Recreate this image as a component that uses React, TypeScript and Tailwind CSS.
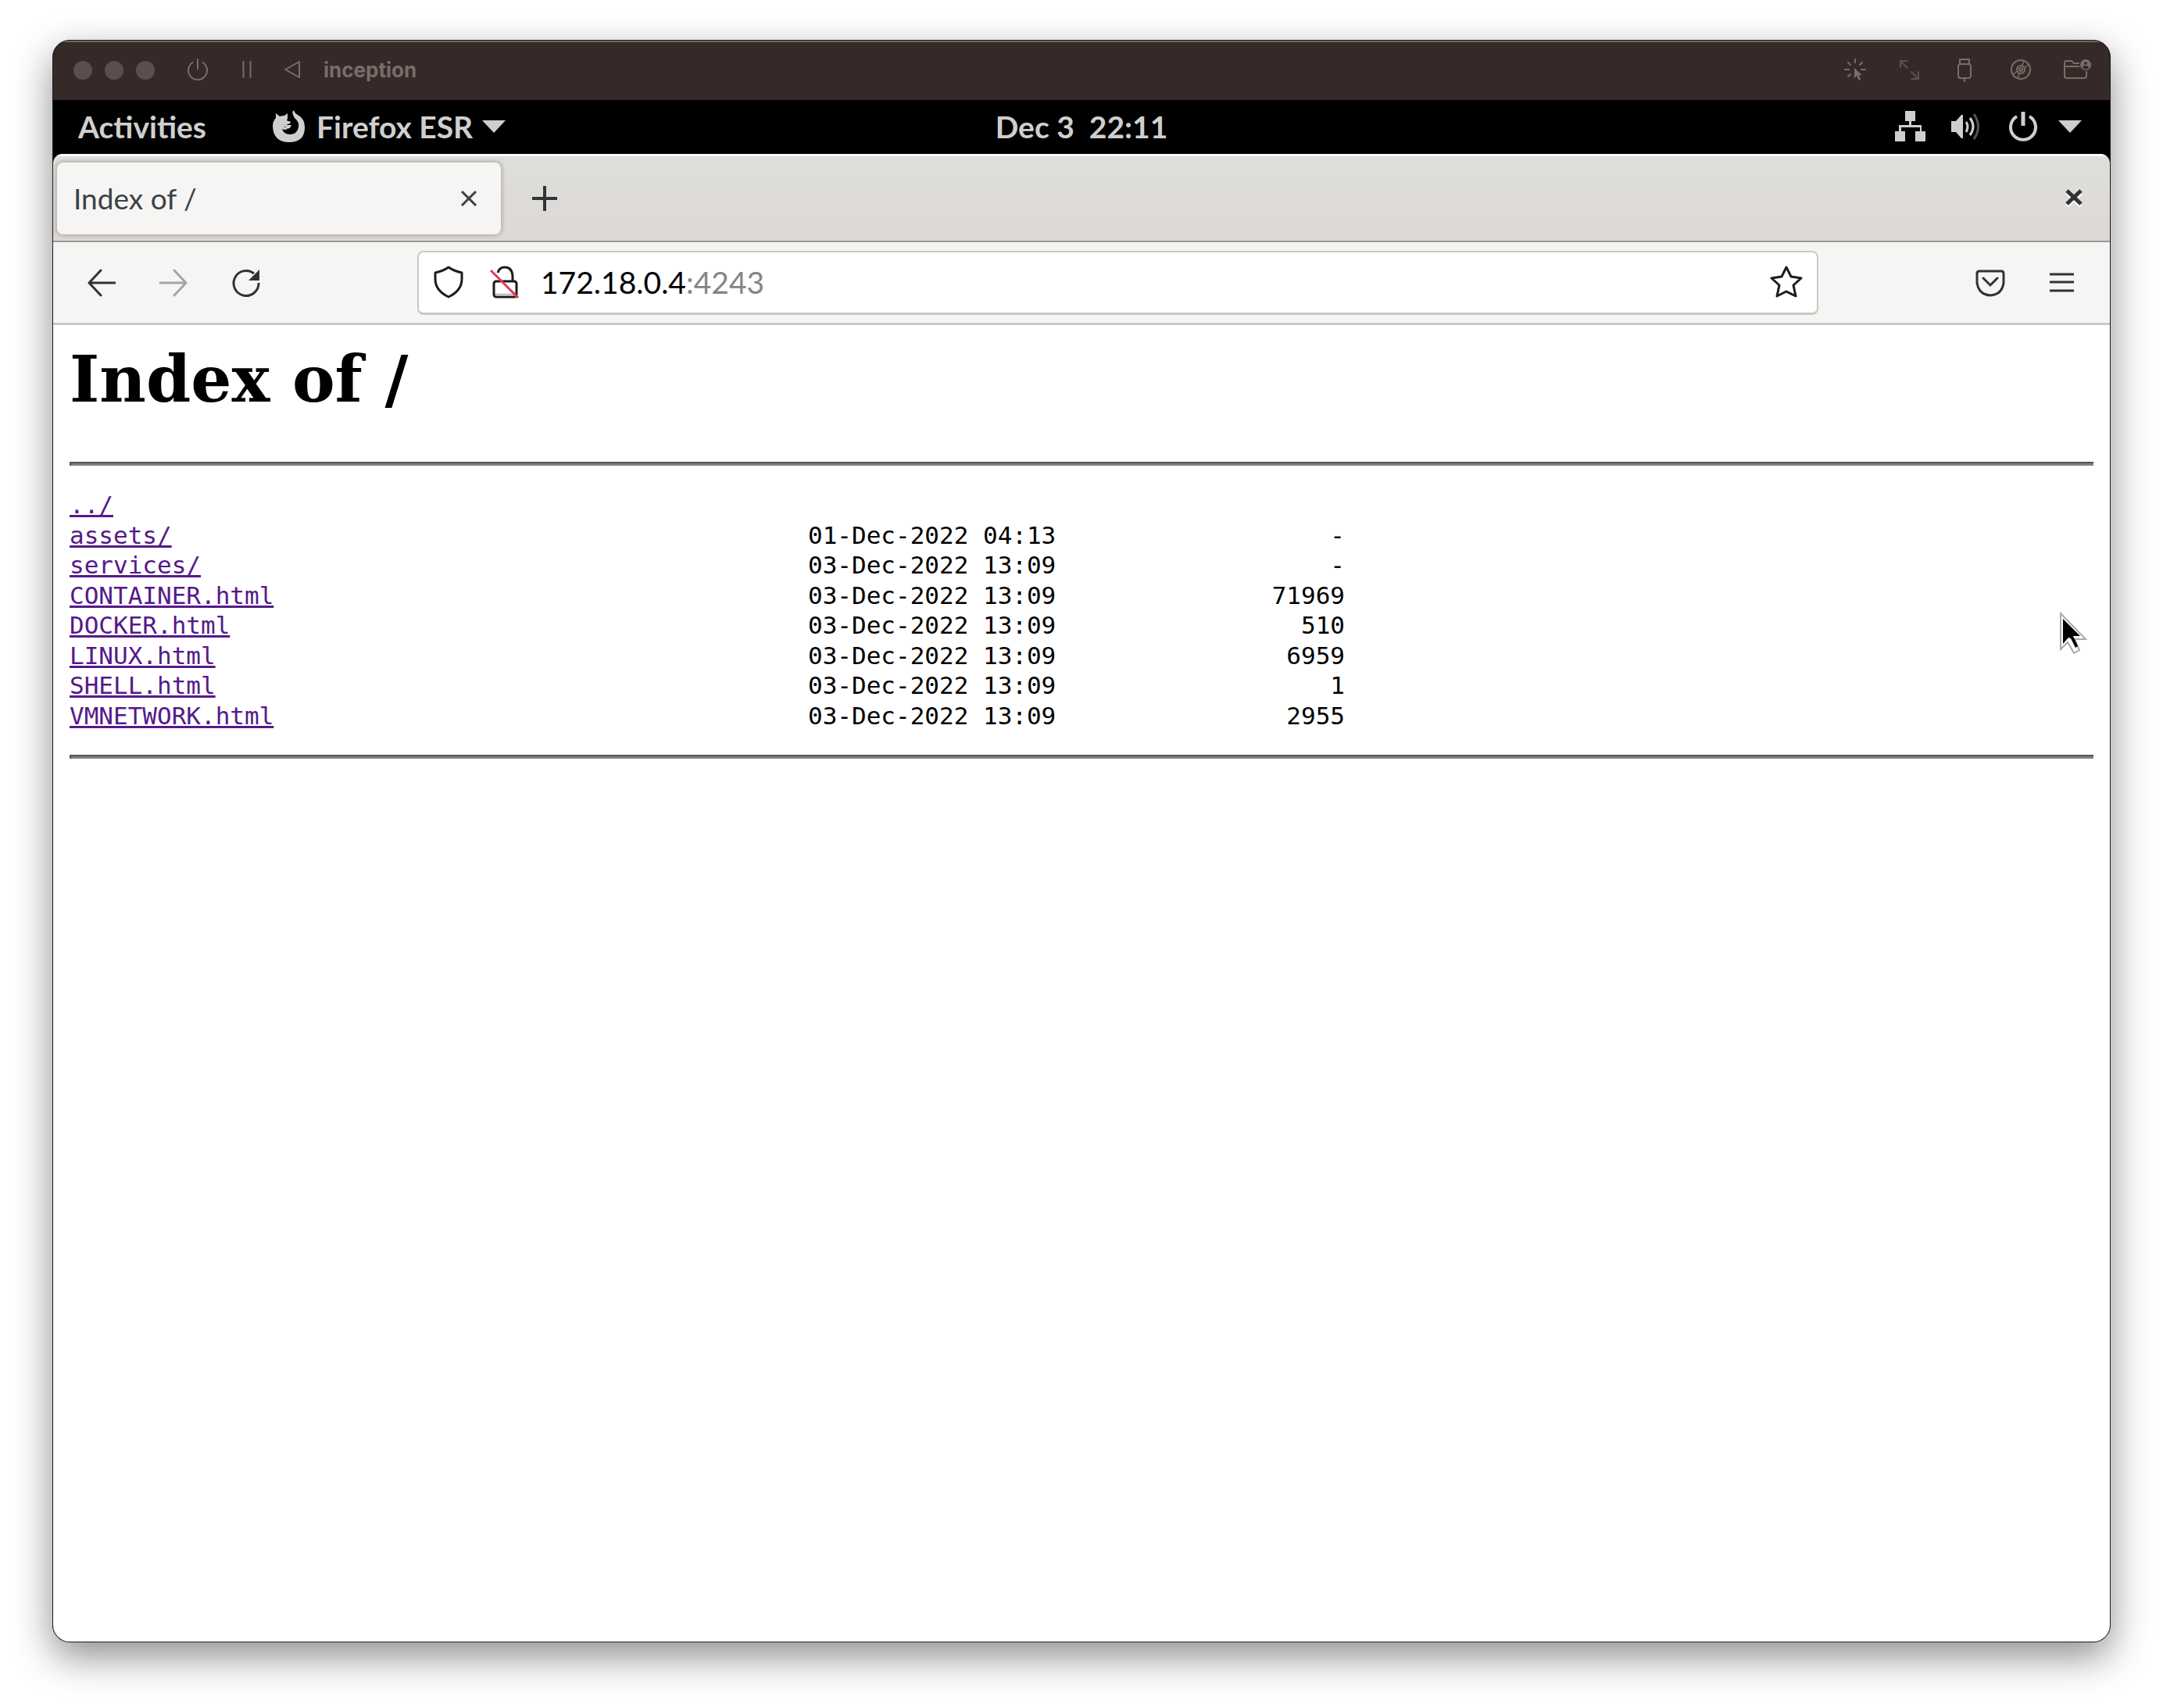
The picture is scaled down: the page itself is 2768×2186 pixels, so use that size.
import type { ReactNode } from "react";

type Entry = { name: string; date?: string; size?: string };

const entries: Entry[] = [
  { name: "../" },
  { name: "assets/", date: "01-Dec-2022 04:13", size: "-" },
  { name: "services/", date: "03-Dec-2022 13:09", size: "-" },
  { name: "CONTAINER.html", date: "03-Dec-2022 13:09", size: "71969" },
  { name: "DOCKER.html", date: "03-Dec-2022 13:09", size: "510" },
  { name: "LINUX.html", date: "03-Dec-2022 13:09", size: "6959" },
  { name: "SHELL.html", date: "03-Dec-2022 13:09", size: "1" },
  { name: "VMNETWORK.html", date: "03-Dec-2022 13:09", size: "2955" },
];

function IconButton({ label, className = "", children }: { label: string; className?: string; children: ReactNode }) {
  return (
    <button type="button" aria-label={label} className={`flex shrink-0 items-center justify-center ${className}`}>
      {children}
    </button>
  );
}

function VmTitleBar() {
  return (
    <header className="flex h-[76px] items-center bg-[#352a28] pr-6 pl-[26px] text-[#7a6d6a] shadow-[inset_0_2px_0_#6f6967]">
      <div className="flex gap-4">
        <IconButton label="Close" className="size-6 rounded-full bg-[#5a4f4c]">{null}</IconButton>
        <IconButton label="Minimize" className="size-6 rounded-full bg-[#5a4f4c]">{null}</IconButton>
        <IconButton label="Zoom" className="size-6 rounded-full bg-[#5a4f4c]">{null}</IconButton>
      </div>
      <IconButton label="Shut down" className="ml-10">
        <svg width="30" height="30" viewBox="0 0 30 30" fill="none" stroke="currentColor" strokeWidth="2" strokeLinecap="round">
          <path d="M15 1v12M8.500 5A12 12 0 1 0 21.500 5" />
        </svg>
      </IconButton>
      <IconButton label="Pause" className="ml-[39px]">
        <svg width="18" height="30" viewBox="0 0 18 30" fill="none" stroke="currentColor" strokeWidth="2" strokeLinecap="round">
          <path d="M4.500 4v20M13.500 4v20" />
        </svg>
      </IconButton>
      <IconButton label="Restart" className="ml-[37px]">
        <svg width="24" height="30" viewBox="0 0 24 30" fill="none" stroke="currentColor" strokeWidth="2" strokeLinejoin="round">
          <path d="M21 4v20L3 14z" />
        </svg>
      </IconButton>
      <h1 className="ml-7 font-[Inter,sans-serif] text-[26px] leading-8 font-bold">inception</h1>
      <div className="ml-auto flex items-center">
        <IconButton label="Capture input" className="mr-10">
          <svg width="30" height="30" viewBox="0 0 30 30" fill="none" stroke="currentColor" strokeWidth="2" strokeLinecap="round">
            <path d="M15 1v4M6 5l3 3M24 5l-3 3M2 14h5M23 14h5M6 23l3-3" />
            <path d="M14 12v13l3-3 3 6 2-1-2-6h4z" fill="currentColor" stroke="none" />
          </svg>
        </IconButton>
        <IconButton label="Resize display" className="mr-[46px] text-[#5d514e]">
          <svg width="28" height="30" viewBox="0 0 28 30" fill="none" stroke="currentColor" strokeWidth="2" strokeLinecap="round" strokeLinejoin="round">
            <path d="M3 11V3h9M3 3l9 9M26 17v9h-9M26 26l-9-9" />
          </svg>
        </IconButton>
        <IconButton label="USB devices" className="mr-[46px]">
          <svg width="22" height="32" viewBox="0 0 22 32" fill="none" stroke="currentColor" strokeWidth="2" strokeLinejoin="round" strokeLinecap="round">
            <path d="M5 8V2h12v6M11 26v4" />
            <rect x="3" y="8" width="16" height="18" rx="3" />
          </svg>
        </IconButton>
        <IconButton label="Drives" className="mr-[39px]">
          <svg width="30" height="30" viewBox="0 0 30 30" fill="none" stroke="currentColor" strokeWidth="2">
            <circle cx="15" cy="14" r="12" />
            <circle cx="15" cy="14" r="5" />
            <circle cx="15" cy="14" r="2" />
            <path d="M17 9l2-6M19.500 12l5-4M13 19l-2 6M10.500 16l-5 4" strokeWidth="1.500" />
          </svg>
        </IconButton>
        <IconButton label="Shared folder">
          <svg width="36" height="30" viewBox="0 0 36 30" fill="none" stroke="currentColor" strokeWidth="2" strokeLinejoin="round">
            <path d="M21 6h-7l-3-3H4Q2 3 2 6v16q0 3 3 3h22q3 0 3-3v-6M2 10h19" />
            <circle cx="29" cy="8" r="7" fill="currentColor" stroke="none" />
            <circle cx="29" cy="6" r="2" fill="#352a28" stroke="none" />
            <path d="M25 12q0-3 4-3t4 3q-4 3-8 0z" fill="#352a28" stroke="none" />
          </svg>
        </IconButton>
      </div>
    </header>
  );
}

function DownTriangle() {
  return (
    <svg width="30" height="16" viewBox="0 0 30 16" fill="currentColor">
      <path d="M0 0h30L15 16z" />
    </svg>
  );
}

function FirefoxMark() {
  return (
    <svg width="42" height="42" viewBox="0 0 42 42" fill="currentColor">
      <path d="M4 4l5 4q3-1 6-1l4-3v8l4-2q0-6 4-10 1 4 5 6 9 5 9 16 0 19-20 19T0 21Q0 14 4 10z" />
      <path d="M18 12l4-2 1-7 2-2q1 8 5 11 4 4 3 10-2 9-11 9-8 0-10-7 4 2 7 0-4-1-4-4 4-2 7-3 2-2-1-3-3 0-3-2z" fill="#000" />
      <path d="M15 19h9l-2 4-5 1z" />
    </svg>
  );
}

function GnomeBar() {
  return (
    <nav aria-label="System" className="grid h-[69px] grid-cols-[1fr_auto_1fr] items-center bg-black px-8 pb-0.5 font-[Lato,sans-serif] text-[39px] leading-[46px] font-bold text-[#cfcfcf]">
      <div className="flex items-center">
        <button type="button">Activities</button>
        <button type="button" className="ml-[85px] flex items-center">
          <FirefoxMark />
          <span className="ml-[14px]">Firefox ESR</span>
          <span className="ml-3">
            <DownTriangle />
          </span>
        </button>
      </div>
      <button type="button" className="whitespace-pre">Dec 3  22:11</button>
      <button type="button" aria-label="System menu" className="flex items-center justify-self-end pr-1">
        <svg width="39" height="40" viewBox="0 0 39 40" fill="currentColor" className="mr-[33px]">
          <path d="M13 0h13v13h-5v5h13v8h5v13H26V26h6v-5H8v5h5v13H0V26h5v-8h13v-5h-5z" />
        </svg>
        <svg width="39" height="38" viewBox="0 0 39 38" fill="none" stroke="currentColor" strokeWidth="3" className="mr-[34px]">
          <path d="M0 12h6L13 4h2v30h-2l-7-8H0z" fill="currentColor" stroke="none" />
          <path d="M19 13q4 6 0 13M24 8q8 11 0 22" />
          <path d="M29 3q11 16 0 32" stroke="#555" />
        </svg>
        <svg width="38" height="38" viewBox="0 0 38 38" fill="none" stroke="currentColor" strokeWidth="4" className="mr-[26px]">
          <path d="M19 0v18" strokeWidth="5" />
          <path d="M11 6A16 16 0 1 0 27 6" />
        </svg>
        <DownTriangle />
      </button>
    </nav>
  );
}

function TabStrip() {
  return (
    <div className="flex h-[113px] items-center border-b-2 border-[#999998] bg-linear-to-b from-[#dfdfdb] to-[#ddd8d5] pt-[3px] pl-[5px] shadow-[inset_0_3px_0_#fbfbfa]">
      <div className="flex h-[92px] w-[568px] items-center justify-between rounded-lg bg-[#f6f5f4] pr-[30px] pl-[21px] shadow-[0_0_5px_2px_#b3b0ad]">
        <button type="button" role="tab" aria-selected="true" className="text-[37px] leading-[46px] text-[#3b4245]">Index of /</button>
        <IconButton label="Close tab">
          <svg width="22" height="22" viewBox="0 0 22 22" stroke="#3b4245" strokeWidth="3">
            <path d="M2 2l18 18M20 2L2 20" />
          </svg>
        </IconButton>
      </div>
      <IconButton label="New tab" className="ml-10">
        <svg width="32" height="32" viewBox="0 0 32 32" stroke="#2e3436" strokeWidth="4">
          <path d="M16 0v32M0 16h32" />
        </svg>
      </IconButton>
      <IconButton label="Close window" className="mr-[35px] ml-auto">
        <svg width="22" height="24" viewBox="0 0 22 24" strokeWidth="5">
          <path d="M2 5l18 17M20 5L2 22" stroke="#f8f8f7" />
          <path d="M2 2l18 17M20 2L2 19" stroke="#2e3436" />
        </svg>
      </IconButton>
    </div>
  );
}

function Toolbar() {
  return (
    <div className="flex h-[106px] items-center border-b-[3px] border-[#cdc7c2] bg-[#f6f5f4] text-[#2e3436]">
      <div className="flex w-[466px] items-center pl-11">
        <IconButton label="Back">
          <svg width="36" height="36" viewBox="0 0 36 36" fill="none" stroke="currentColor" strokeWidth="3" strokeLinecap="round">
            <path d="M2 18h33M17 2L2 18l15 16" />
          </svg>
        </IconButton>
        <IconButton label="Forward" className="ml-14 text-[#a5a5a4]">
          <svg width="36" height="36" viewBox="0 0 36 36" fill="none" stroke="currentColor" strokeWidth="3" strokeLinecap="round">
            <path d="M1 18h33M19 2l15 16-15 16" />
          </svg>
        </IconButton>
        <IconButton label="Reload" className="ml-14">
          <svg width="38" height="38" viewBox="0 0 38 38" fill="none" stroke="currentColor" strokeWidth="3">
            <path d="M35 19A16 16 0 1 1 29 7" />
            <path d="M36 2v14H22z" fill="currentColor" stroke="none" />
          </svg>
        </IconButton>
      </div>
      <form className="flex h-[82px] flex-1 items-center rounded-lg border-2 border-b-[3px] border-[#cdc7c2] bg-white px-[18px] text-[#1c1c1c]">
        <IconButton label="Tracking protection">
          <svg width="40" height="42" viewBox="0 0 40 42" fill="none" stroke="currentColor" strokeWidth="3" strokeLinejoin="round">
            <path d="M20 2Q27 7 37 9v8q0 15-17 23Q3 32 3 17V9q10-2 17-7z" />
          </svg>
        </IconButton>
        <IconButton label="Connection is not secure" className="ml-8">
          <svg width="40" height="42" viewBox="0 0 40 42" fill="none" stroke="currentColor" strokeWidth="3">
            <path d="M11 9q2-7 9-7 9 0 10 11v7" />
            <rect x="6" y="20" width="29" height="20" rx="3" fill="#fff" />
            <path d="M8 37h25" stroke="#c4c4c4" />
            <path d="M2 6l35 35" stroke="#e23b55" />
          </svg>
        </IconButton>
        <div className="ml-[26px] grid flex-1 text-[39px] leading-[46px]">
          <span aria-hidden="true" className="col-start-1 row-start-1 text-black">
            172.18.0.4<span className="text-[#858585]">:4243</span>
          </span>
          <input aria-label="Address" defaultValue="172.18.0.4:4243" className="col-start-1 row-start-1 w-full bg-transparent text-transparent outline-none" />
        </div>
        <IconButton label="Bookmark this page">
          <svg width="42" height="42" viewBox="0 0 42 42" fill="none" stroke="currentColor" strokeWidth="3" strokeLinejoin="round">
            <path d="M21 2l6 12 13 2-10 9 3 14-12-6-12 6 3-14L2 16l13-2z" />
          </svg>
        </IconButton>
      </form>
      <div className="flex w-[373px] items-center justify-end pr-11">
        <IconButton label="Save to Pocket">
          <svg width="38" height="36" viewBox="0 0 38 36" fill="none" stroke="currentColor" strokeWidth="3" strokeLinecap="round" strokeLinejoin="round">
            <path d="M5 3h28q3 0 3 3v12q-2 15-17 16Q4 33 2 18V6q0-3 3-3z" />
            <path d="M10 12l9 9 9-9" />
          </svg>
        </IconButton>
        <IconButton label="Open application menu" className="ml-14">
          <svg width="34" height="28" viewBox="0 0 34 28" stroke="currentColor" strokeWidth="3">
            <path d="M1 3h31M1 13h31M1 24h31" />
          </svg>
        </IconButton>
      </div>
    </div>
  );
}

function Rule() {
  return <hr className="h-[5px] border-0 border-t-2 border-l-2 border-[#555] bg-[#808080]" />;
}

function Listing() {
  return (
    <main className="relative flex-1 bg-white px-[21px] text-black">
      <h2 className="mt-5 mb-[57px] font-['DejaVu_Serif',serif] text-[82px] leading-[98px] font-bold">Index of /</h2>
      <Rule />
      <table className="my-[31px] h-[308px] border-collapse font-['DejaVu_Sans_Mono',monospace] text-[31px] leading-[38px]">
        <tbody>
          {entries.map((e) => (
            <tr key={e.name}>
              <td className="w-[945px] p-0">
                <a href="#" className="text-[#551a8b] underline decoration-[3px]">{e.name}</a>
              </td>
              <td className="w-[320px] p-0">{e.date}</td>
              <td className="w-[367px] p-0 text-right">{e.size}</td>
            </tr>
          ))}
        </tbody>
      </table>
      <Rule />
      <svg width="38" height="56" viewBox="0 0 38 56" className="absolute top-[367px] right-[27px]">
        <path d="M2 2v46l9-9 8 14 7-4-6-14h14z" fill="#fff" stroke="#aaa" strokeWidth="2" />
        <path d="M5 9v32l7-8 3 1 6 12 3-2-6-13h9z" fill="#000" />
      </svg>
    </main>
  );
}

export default function App() {
  return (
    <div className="flex min-h-screen bg-white px-[67px] pt-[51px] pb-[84px]">
      <div className="flex flex-1 flex-col overflow-hidden rounded-[22px] border border-[#1c1c1c] bg-black shadow-[0_18px_50px_rgba(0,0,0,0.45)]">
        <VmTitleBar />
        <GnomeBar />
        <div className="flex flex-1 flex-col overflow-hidden rounded-t-xl font-[Lato,sans-serif]">
          <TabStrip />
          <Toolbar />
          <Listing />
        </div>
      </div>
    </div>
  );
}
